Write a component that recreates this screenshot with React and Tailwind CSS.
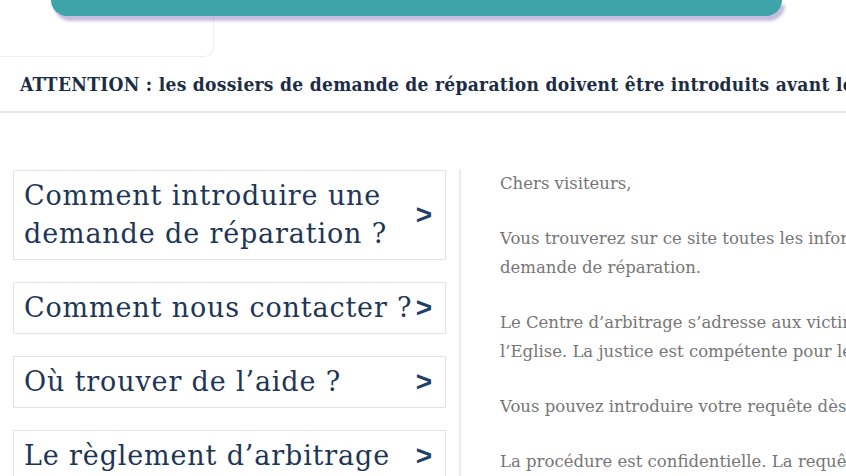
import { useState } from "react";

const menuItems = [
  { id: "introduire", label: "Comment introduire une demande de réparation ?" },
  { id: "contact", label: "Comment nous contacter ?" },
  { id: "aide", label: "Où trouver de l’aide ?" },
  { id: "reglement", label: "Le règlement d’arbitrage" },
];

const paragraphs = [
  ["Chers visiteurs,"],
  [
    "Vous trouverez sur ce site toutes les informations utiles pour introduire une",
    "demande de réparation.",
  ],
  [
    "Le Centre d’arbitrage s’adresse aux victimes d’abus sexuels commis dans une relation pastorale au sein de",
    "l’Eglise. La justice est compétente pour les faits non prescrits.",
  ],
  ["Vous pouvez introduire votre requête dès maintenant."],
  ["La procédure est confidentielle. La requête est traitée par le Centre d’arbitrage."],
];

function MenuBox({ label, active, onClick }) {
  return (
    <a
      href="#"
      onClick={onClick}
      className={`flex items-center justify-between border bg-white py-[6px] pl-[10px] pr-[13px] ${
        active ? "border-[#cfd6df]" : "border-[#e3e3e3]"
      }`}
    >
      <span className="text-[27px] leading-[38px] text-[#1e3656] font-['DejaVu_Serif',serif] tracking-[0.85px]">
        {label}
      </span>
      <span className="shrink-0 text-[28px] font-bold leading-none text-[#20406a] font-['Liberation_Sans',sans-serif]">
        &gt;
      </span>
    </a>
  );
}

export default function App() {
  const [active, setActive] = useState(null);

  return (
    <div className="h-[476px] overflow-hidden bg-white">
      <header className="relative h-[60px]">
        <div className="h-[57px] w-[214px] rounded-br-[10px] border-b border-r border-[#eeeeee]" />
        <div className="absolute left-[51px] top-0 h-[16px] w-[731px] rounded-b-[16px] bg-[#3ea4a9] shadow-[3px_5px_3px_rgba(150,135,195,0.55)]" />
      </header>

      <div className="border-b-2 border-[#e6e6e6] pb-[13px] pl-[20px] pt-[10px]">
        <p className="whitespace-nowrap text-[19px] font-bold leading-[28px] text-[#1c2c45] font-['DejaVu_Serif_Condensed','DejaVu_Serif',serif] tracking-[0.3px]">
          ATTENTION : les dossiers de demande de réparation doivent être introduits avant le 31 décembre
        </p>
      </div>

      <main className="flex pt-[57px]">
        <nav className="flex w-[459px] shrink-0 flex-col gap-[22px] pl-[13px] pr-[13px]" aria-label="Menu">
          {menuItems.map((item) => (
            <MenuBox
              key={item.id}
              label={item.label}
              active={active === item.id}
              onClick={(e) => {
                e.preventDefault();
                setActive(item.id);
              }}
            />
          ))}
        </nav>

        <section className="-mt-[1px] min-w-0 flex-1 border-l-2 border-[#ececec] pl-[39px]">
          {paragraphs.map((lines, i) => (
            <p
              key={i}
              className="mb-[26px] whitespace-nowrap text-[16.5px] leading-[29px] text-[#767676] font-['DejaVu_Serif',serif]"
            >
              {lines.map((line, j) => (
                <span key={j} className="block">
                  {line}
                </span>
              ))}
            </p>
          ))}
        </section>
      </main>
    </div>
  );
}
